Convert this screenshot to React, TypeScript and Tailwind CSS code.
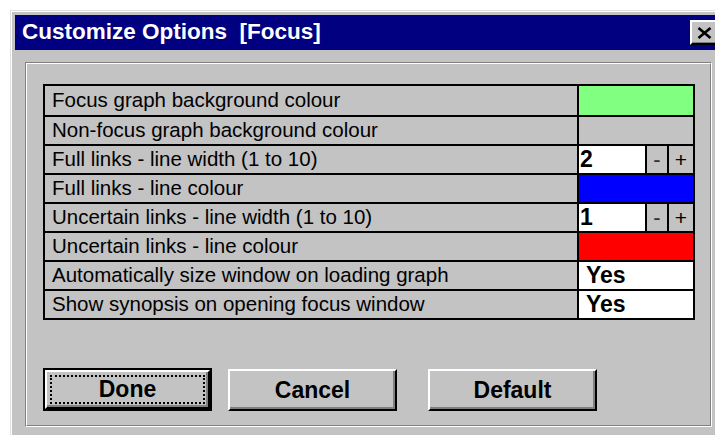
import React from "react";

type Row = {
  label: string;
  kind: "color" | "empty" | "number" | "yes";
  swatch?: string;
  value?: string;
};

const rows: Row[] = [
  { label: "Focus graph background colour", kind: "color", swatch: "bg-[#80ff80]" },
  { label: "Non-focus graph background colour", kind: "empty" },
  { label: "Full links - line width (1 to 10)", kind: "number", value: "2" },
  { label: "Full links - line colour", kind: "color", swatch: "bg-[#0000ff]" },
  { label: "Uncertain links - line width (1 to 10)", kind: "number", value: "1" },
  { label: "Uncertain links - line colour", kind: "color", swatch: "bg-[#ff0000]" },
  { label: "Automatically size window on loading graph", kind: "yes", value: "Yes" },
  { label: "Show synopsis on opening focus window", kind: "yes", value: "Yes" },
];

const bevel =
  "border-2 border-t-white border-l-white border-r-black border-b-black shadow-[inset_-2px_-2px_#808080] bg-[#c3c3c3]";

function ValueCell({ row }: { row: Row }) {
  if (row.kind === "color") return <div className={`h-full w-full ${row.swatch}`} />;
  if (row.kind === "empty") return <div className="h-full w-full" />;
  if (row.kind === "yes")
    return (
      <div className="flex h-full w-full items-center bg-white pl-[7px] text-[23px] font-bold leading-none">
        {row.value}
      </div>
    );
  return (
    <div className="flex h-full w-full">
      <div className="flex h-full w-[66px] items-center bg-white pl-[1px] text-[23px] font-bold leading-none">
        {row.value}
      </div>
      <div className="flex h-full w-[22px] items-center justify-center border-l-2 border-black text-[22px] leading-none text-[#303030]">
        -
      </div>
      <div className="flex h-full flex-1 items-center justify-center border-l-2 border-black text-[21px] leading-none">
        +
      </div>
    </div>
  );
}

function DialogButton({ label, isDefault }: { label: string; isDefault?: boolean }) {
  if (isDefault) {
    return (
      <div className="h-[43px] w-[169px] border-2 border-black">
        <div className={`flex h-full w-full items-center justify-center p-[3px] ${bevel}`}>
          <div className="flex h-full w-full items-center justify-center border-2 border-dotted border-black text-[23px] font-bold leading-none">
            {label}
          </div>
        </div>
      </div>
    );
  }
  return (
    <div className={`flex h-[42px] w-[169px] items-center justify-center text-[23px] font-bold leading-none ${bevel}`}>
      {label}
    </div>
  );
}

export default function App() {
  return (
    <div className="h-[435px] w-[715px] overflow-hidden bg-white pl-[10px] pt-[10px] font-['Liberation_Sans',Arial,sans-serif] text-black">
      <div className="h-[440px] w-[720px] border-l border-t border-[#dfdfdf] bg-[#c3c3c3]">
        <div className="h-full w-full border-l border-t border-white p-[3px]">
          {/* title bar */}
          <div className="flex h-[35px] items-center bg-[#000080] pl-[7px] pr-[8px]">
            <span className="whitespace-pre text-[22.5px] font-bold leading-none text-white">
              Customize Options  [Focus]
            </span>
            <div className="ml-auto flex h-[25px] w-[29px] items-center justify-center border-2 border-t-white border-l-white border-r-black border-b-black bg-[#c3c3c3] shadow-[inset_-1px_-1px_#808080]">
              <svg width="15" height="12" viewBox="0 0 15 12">
                <path d="M1.5 1 L13.5 11 M13.5 1 L1.5 11" stroke="#000" strokeWidth="2.6" />
              </svg>
            </div>
          </div>

          {/* options group */}
          <div className="ml-[10px] mt-[12px] w-[687px] border border-b-white border-l-[#808080] border-r-white border-t-[#808080]">
            <div className="border border-b-[#808080] border-l-white border-r-[#808080] border-t-white pb-[14px] pl-[16px] pt-[20px]">
              <div className="w-[652px] border-2 border-black">
                {rows.map((row, i) => (
                  <div
                    key={row.label}
                    className={`flex h-[29px] ${i === 0 ? "h-[27px]" : "border-t-2 border-black"}`}
                  >
                    <div className="flex h-full w-[534px] items-center border-r-2 border-black pl-[7px] text-[20.5px] leading-none">
                      {row.label}
                    </div>
                    <div className="h-full flex-1">
                      <ValueCell row={row} />
                    </div>
                  </div>
                ))}
              </div>

              <div className="mt-[48px] flex items-start">
                <DialogButton label="Done" isDefault />
                <div className="ml-[16px] mt-[1px]">
                  <DialogButton label="Cancel" />
                </div>
                <div className="ml-[31px] mt-[1px]">
                  <DialogButton label="Default" />
                </div>
              </div>
            </div>
          </div>
        </div>
      </div>
    </div>
  );
}
